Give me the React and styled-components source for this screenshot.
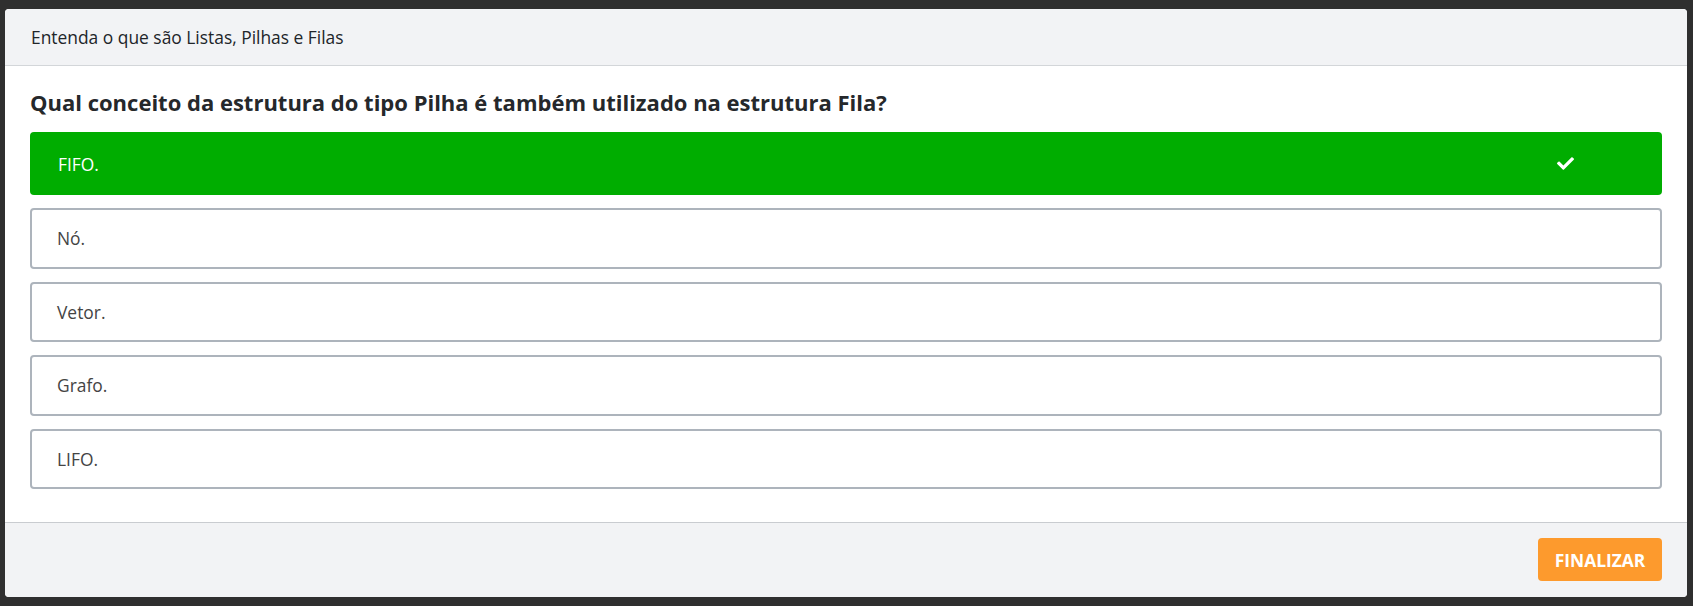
import React from 'react'
import styled, { createGlobalStyle, css } from 'styled-components'

const GlobalStyle = createGlobalStyle`
  html, body {
    margin: 0;
    padding: 0;
    overflow: hidden;
    background: #2f2f2f;
    font-family: 'Open Sans', 'Noto Sans', sans-serif;
  }
  * {
    box-sizing: border-box;
  }
`

const Page = styled.div`
  padding: 9px 6px 9px 5px;
  height: 606px;
`

const Modal = styled.div`
  background: #fff;
  border-radius: 4px;
  overflow: hidden;
  display: flex;
  flex-direction: column;
  height: 588px;
`

const Header = styled.div`
  background: #f2f3f5;
  border-bottom: 1px solid #d3d6d9;
  height: 57px;
  display: flex;
  align-items: center;
  padding: 0 26px;
  font-size: 17.4px;
  color: #212529;
`

const Body = styled.div`
  flex: 1;
  padding: 21px 25px 0;
`

const Question = styled.h2`
  margin: 0 0 14px;
  font-size: 22px;
  line-height: 31px;
  font-weight: 700;
  color: #25282b;
`

const Options = styled.div`
  display: flex;
  flex-direction: column;
  gap: 13px;
`

const Option = styled.div`
  display: flex;
  align-items: center;
  justify-content: space-between;
  height: 60.5px;
  padding: 0 25px;
  border: 2px solid #adb4bc;
  border-radius: 4px;
  background: #fff;
  color: #444;
  font-size: 17.4px;

  ${({ correct }) =>
    correct &&
    css`
      height: 63px;
      padding: 0 88px 0 28px;
      border: none;
      background: #00ad00;
      color: #fff;
    `}
`

const Check = styled.svg`
  width: 17px;
  height: 13px;
  fill: #fff;
`

const Footer = styled.div`
  background: #f2f3f5;
  border-top: 1.5px solid #c9ccd0;
  height: 75px;
  display: flex;
  align-items: center;
  justify-content: flex-end;
  padding: 0 25px 1px;
`

const Button = styled.button`
  height: 43px;
  width: 124px;
  padding: 0;
  border: none;
  border-radius: 4px;
  background: #fd9a2d;
  color: #fff;
  font-family: inherit;
  font-size: 17.4px;
  font-weight: 700;
  text-transform: uppercase;
`

const options = [
  { label: 'FIFO.', correct: true },
  { label: 'Nó.' },
  { label: 'Vetor.' },
  { label: 'Grafo.' },
  { label: 'LIFO.' }
]

const App = () => (
  <>
    <GlobalStyle />
    <Page>
      <Modal>
        <Header>Entenda o que são Listas, Pilhas e Filas</Header>
        <Body>
          <Question>Qual conceito da estrutura do tipo Pilha é também utilizado na estrutura Fila?</Question>
          <Options>
            {options.map(({ label, correct }) => (
              <Option key={label} correct={correct}>
                <span>{label}</span>
                {correct && (
                  <Check viewBox="0 72 512 368">
                    <path d="M173.898 439.404l-166.4-166.4c-9.997-9.997-9.997-26.206 0-36.204l36.203-36.204c9.997-9.998 26.207-9.998 36.204 0L192 312.69 432.095 72.596c9.997-9.997 26.207-9.997 36.204 0l36.203 36.204c9.997 9.997 9.997 26.206 0 36.204l-294.4 294.401c-9.998 9.997-26.207 9.997-36.204-.001z" />
                  </Check>
                )}
              </Option>
            ))}
          </Options>
        </Body>
        <Footer>
          <Button>Finalizar</Button>
        </Footer>
      </Modal>
    </Page>
  </>
)

export default App
